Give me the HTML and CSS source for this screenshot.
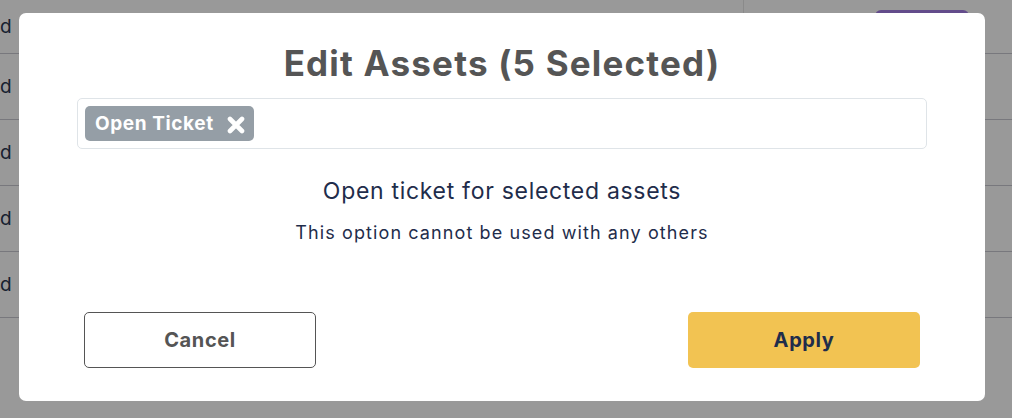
FILE: index.html
```html
<!DOCTYPE html>
<html lang="en">

<head>
  <meta charset="UTF-8" />
  <title>Edit Assets</title>
  <link rel="stylesheet" href="styles.css">
</head>

<body>
  <div class="page">
    <div class="table">
      <div class="row first">
        <span class="cell">d</span>
        <span class="divider"></span>
        <span class="action">Edit</span>
      </div>
      <div class="row"><span class="cell">d</span></div>
      <div class="row"><span class="cell">d</span></div>
      <div class="row"><span class="cell">d</span></div>
      <div class="row"><span class="cell">d</span></div>
    </div>
  </div>

  <div class="overlay"></div>

  <div class="modal">
    <h1>Edit Assets (5 Selected)</h1>

    <div class="tag-input">
      <span class="chip">
        Open Ticket
        <svg class="chip-x" width="18" height="18" viewBox="0 0 18 18">
          <path d="M3 3 L15 15 M15 3 L3 15" stroke="#fff" stroke-width="4.6" stroke-linecap="round" />
        </svg>
      </span>
    </div>

    <div class="info">
      <h2>Open ticket for selected assets</h2>
      <p>This option cannot be used with any others</p>
    </div>

    <div class="actions">
      <button class="btn btn-cancel" type="button">Cancel</button>
      <button class="btn btn-apply" type="button">Apply</button>
    </div>
  </div>
</body>

</html>
```

FILE: styles.css
```css
* {
  margin: 0;
  padding: 0;
  box-sizing: border-box;
  font-family: 'Inter', sans-serif;
}

body {
  width: 1012px;
  height: 418px;
  overflow: hidden;
  background: #fff;
  position: relative;
}

/* pagina atras do modal */
.table {
  display: flex;
  flex-direction: column;
}

.row {
  height: 66px;
  border-bottom: 1px solid #c8c8d0;
  display: flex;
  align-items: center;
  position: relative;
}

.row.first {
  height: 54px;
}

.cell {
  font-size: 19px;
  color: #2b3650;
  padding-left: 0;
}

.divider {
  position: absolute;
  left: 743px;
  top: 0;
  bottom: 0;
  border-left: 1px solid #e6e6e6;
}

.action {
  position: absolute;
  left: 875px;
  top: 10px;
  width: 94px;
  height: 34px;
  border-radius: 6px;
  background: #a67fe8;
  color: #fff;
}

.overlay {
  position: absolute;
  inset: 0;
  background: rgba(0, 0, 0, 0.4);
}

/* modal */
.modal {
  position: absolute;
  left: 19px;
  top: 13px;
  width: 966px;
  height: 388px;
  background: #fff;
  border-radius: 7px;
  padding: 28px 58px 33px 58px;
  display: flex;
  flex-direction: column;
}

h1 {
  text-align: center;
  font-size: 35px;
  font-weight: 700;
  letter-spacing: 1.2px;
  color: #555;
  line-height: 44px;
  margin-bottom: 13px;
}

.tag-input {
  height: 51px;
  border: 1px solid #dfe4e8;
  border-radius: 5px;
  padding: 7px;
  display: flex;
  align-items: flex-start;
}

.chip {
  display: inline-flex;
  align-items: center;
  gap: 13px;
  height: 35px;
  padding: 0 9px 0 10px;
  background: #959ea6;
  border-radius: 5px;
  color: #fff;
  font-size: 19px;
  font-weight: 700;
  letter-spacing: 0.6px;
}

.chip-x {
  margin-top: 3px;
}

.info {
  text-align: center;
  color: #1f2d4b;
  margin-top: 28px;
}

.info h2 {
  font-size: 23px;
  font-weight: 400;
  letter-spacing: 0.7px;
  line-height: 28px;
  margin-bottom: 17px;
}

.info p {
  font-size: 18px;
  letter-spacing: 1.1px;
  line-height: 22px;
}

.actions {
  margin-top: auto;
  display: flex;
  justify-content: space-between;
  padding: 0 7px;
}

.btn {
  width: 232px;
  height: 56px;
  border-radius: 5px;
  font-size: 20px;
  font-weight: 700;
  letter-spacing: 0.6px;
  cursor: pointer;
}

.btn-cancel {
  background: #fff;
  border: 1px solid #555;
  color: #555;
}

.btn-apply {
  background: #f2c352;
  border: none;
  color: #1f2d4b;
}
```
